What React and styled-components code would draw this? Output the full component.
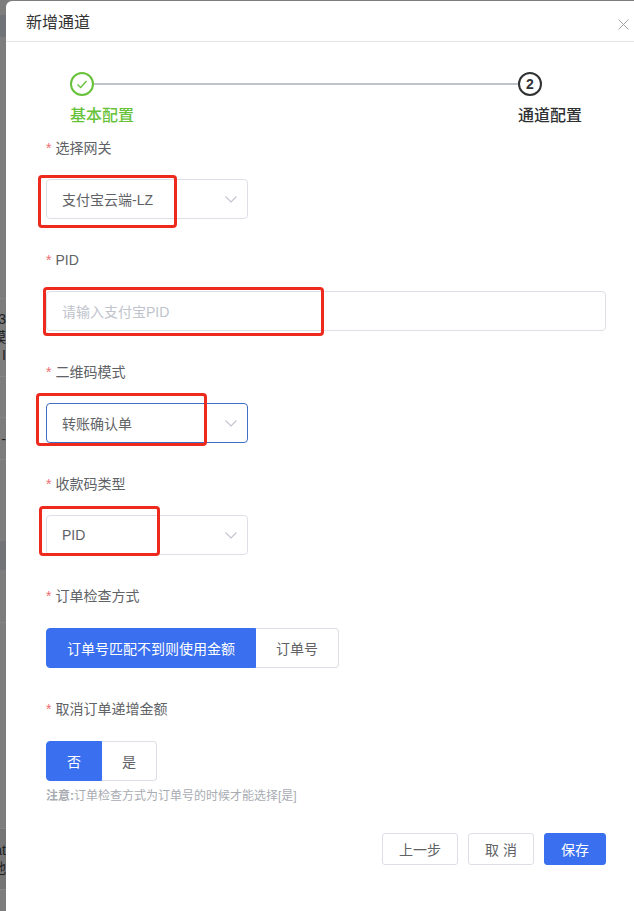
import React from "react";
import styled, { createGlobalStyle } from "styled-components";

const Global = createGlobalStyle`
  html, body { margin: 0; padding: 0; }
  body { background: #7d7d7d; font-family: "Liberation Sans", "Noto Sans CJK SC", sans-serif; }
`;
const Page = styled.div`
  position: relative; width: 634px; height: 911px; overflow: hidden; background: #7d7d7d;
`;
const Backdrop = styled.div`
  position: absolute; left: 0; top: 0; width: 6px; height: 911px; overflow: hidden;
  display: flex; flex-direction: column;
`;
const BackRow = styled.div`
  box-sizing: border-box; flex: none; height: ${p => p.$h}px; background: ${p => p.$bg || "#7d7d7d"};
  border-bottom: ${p => (p.$line ? "1px solid #868686" : "none")};
  padding-top: ${p => p.$pt || 0}px;
`;
const BackText = styled.div`
  display: flex; justify-content: flex-end; width: 6px; white-space: nowrap; overflow: hidden;
  font-size: 14px; line-height: ${p => p.$lh || 18}px; color: #1e1e1e;
`;
const Dialog = styled.div`
  position: absolute; left: 6px; top: 1px; width: 640px; height: 920px;
  background: #fff; border-radius: 6px 0 0 0; display: flex; flex-direction: column;
`;
const Header = styled.div`
  box-sizing: border-box; height: 41px; flex: none; border-bottom: 1px solid #e4e5e7; display: flex; align-items: center;
  padding: 0 4px 0 20px; width: 628px; color: #333; font-size: 16px;
`;
const Title = styled.div`flex: 1;`;
const Close = styled.svg`width: 13px; height: 13px; margin-top: 7px;`;
const Body = styled.div`padding: 0 0 0 40px; width: 560px; display: flex; flex-direction: column;`;
const Steps = styled.div`
  display: grid; grid-template-columns: 24px 1fr 24px; align-items: center;
  width: 472px; margin: 30px 0 0 24px;
`;
const Line = styled.div`height: 2px; background: #c0c4cc;`;
const Ring = styled.div`
  width: 24px; height: 24px; box-sizing: border-box; border: 2px solid ${p => p.$c};
  border-radius: 50%; display: flex; align-items: center; justify-content: center;
  color: ${p => p.$c}; font-size: 14px; font-weight: 700;
`;
const StepLabels = styled.div`
  display: flex; justify-content: space-between; margin: 9px 0 0 24px; width: 512px;
  font-size: 16px; font-weight: 500; line-height: 22px;
`;
const StepLabel = styled.div`color: ${p => p.$c};`;
const Field = styled.div`margin-top: ${p => p.$mt || 31}px; display: flex; flex-direction: column;`;
const Label = styled.div`
  font-size: 14px; line-height: 20px; color: #606266; height: 20px; margin-bottom: 21px;
`;
const Star = styled.span`color: #f56c6c; margin-right: 4px;`;
const SelectBox = styled.div`
  width: 202px; height: 40px; box-sizing: border-box; border: 1px solid ${p => (p.$focus ? "#3f6fc4" : "#dcdfe6")};
  border-radius: 4px; padding: 0 10px 0 15px; display: flex; align-items: center; justify-content: space-between;
  font-size: 14px; color: #606266;
`;
const InputBox = styled(SelectBox)`width: 560px; color: #c0c4cc;`;
const Chevron = styled.svg`width: 14px; height: 14px; margin-right: -1px;`;
const Group = styled.div`display: flex; height: 40px; margin-top: 1px;`;
const Seg = styled.div`
  box-sizing: border-box; height: 40px; padding: 0 20px; display: flex; align-items: center;
  font-size: 14px; color: ${p => (p.$on ? "#fff" : "#606266")}; background: ${p => (p.$on ? "#3a6ff0" : "#fff")};
  border: 1px solid ${p => (p.$on ? "#3a6ff0" : "#dcdfe6")};
  border-left-width: ${p => (p.$on ? 1 : 0)}px;
  border-radius: ${p => (p.$on ? "4px 0 0 4px" : "0 4px 4px 0")};
`;
const Note = styled.div`font-size: 12px; line-height: 16px; color: #a8abb2; margin-top: 7px;`;
const NoteStrong = styled.b`font-weight: 700;`;
const Footer = styled.div`display: flex; gap: 10px; margin-top: 29px; justify-content: flex-end; width: 560px;`;
const Btn = styled.div`
  box-sizing: border-box; height: 32px; width: ${p => p.$w}px; border-radius: 3px; display: flex; align-items: center;
  justify-content: center; font-size: 14px; border: 1px solid ${p => (p.$primary ? "#3a6ff0" : "#dcdfe6")};
  background: ${p => (p.$primary ? "#3a6ff0" : "#fff")}; color: ${p => (p.$primary ? "#fff" : "#606266")};
`;
const Mark = styled.div`
  position: absolute; box-sizing: border-box; border: 3px solid #ee2a1e; border-radius: 4px;
  left: ${p => p.$x}px; top: ${p => p.$y}px; width: ${p => p.$w}px; height: ${p => p.$h}px;
`;

function ChevronIcon() {
  return (
    <Chevron viewBox="0 0 14 14" fill="none" stroke="#c0c4cc" strokeWidth="1.1">
      <path d="M1.5 4.5 7 10l5.5-5.5" />
    </Chevron>
  );
}

export default function App() {
  return (
    <Page>
      <Global />
      <Backdrop>
        <BackRow $h={15} />
        <BackRow $h={22} $bg="#707378" />
        <BackRow $h={262} $line />
        <BackRow $h={78} $line $pt={11}>
          <BackText>3</BackText>
          <BackText>模</BackText>
          <BackText>I</BackText>
        </BackRow>
        <BackRow $h={41} $line />
        <BackRow $h={42} $line $pt={12}>
          <BackText>-</BackText>
        </BackRow>
        <BackRow $h={81} />
        <BackRow $h={29} $bg="#727477" />
        <BackRow $h={53} $line />
        <BackRow $h={206} $line />
        <BackRow $h={61} $line $bg="#757575" $pt={12}>
          <BackText>at</BackText>
          <BackText>地</BackText>
        </BackRow>
      </Backdrop>
      <Dialog>
        <Header>
          <Title>新增通道</Title>
          <Close viewBox="0 0 13 13" stroke="#a3a3a3" strokeWidth="1" fill="none"><path d="M1.5 1.5l10 10M11.5 1.5l-10 10" /></Close>
        </Header>
        <Body>
          <Steps>
            <Ring $c="#67c23a">
              <svg width="14" height="14" viewBox="0 0 14 14" fill="none" stroke="#67c23a" strokeWidth="1.4"><path d="M2.5 7.5 5.7 10.5 11.5 4" /></svg>
            </Ring>
            <Line />
            <Ring $c="#303133">2</Ring>
          </Steps>
          <StepLabels>
            <StepLabel $c="#67c23a">基本配置</StepLabel>
            <StepLabel $c="#303133">通道配置</StepLabel>
          </StepLabels>
          <Field $mt={11}>
            <Label><Star>*</Star>选择网关</Label>
            <SelectBox>支付宝云端-LZ<ChevronIcon /></SelectBox>
          </Field>
          <Field>
            <Label><Star>*</Star>PID</Label>
            <InputBox>请输入支付宝PID</InputBox>
          </Field>
          <Field>
            <Label><Star>*</Star>二维码模式</Label>
            <SelectBox $focus>转账确认单<ChevronIcon /></SelectBox>
          </Field>
          <Field>
            <Label><Star>*</Star>收款码类型</Label>
            <SelectBox>PID<ChevronIcon /></SelectBox>
          </Field>
          <Field>
            <Label><Star>*</Star>订单检查方式</Label>
            <Group>
              <Seg $on>订单号匹配不到则使用金额</Seg>
              <Seg>订单号</Seg>
            </Group>
          </Field>
          <Field>
            <Label><Star>*</Star>取消订单递增金额</Label>
            <Group>
              <Seg $on>否</Seg>
              <Seg>是</Seg>
            </Group>
            <Note><NoteStrong>注意:</NoteStrong>订单检查方式为订单号的时候才能选择[是]</Note>
          </Field>
          <Footer>
            <Btn $w={76}>上一步</Btn>
            <Btn $w={66}>取 消</Btn>
            <Btn $w={62} $primary>保存</Btn>
          </Footer>
        </Body>
      </Dialog>
      <Mark $x={38} $y={175} $w={139} $h={53} />
      <Mark $x={43} $y={287} $w={281} $h={49} />
      <Mark $x={36} $y={393} $w={171} $h={53} />
      <Mark $x={39} $y={506} $w={121} $h={50} />
    </Page>
  );
}
